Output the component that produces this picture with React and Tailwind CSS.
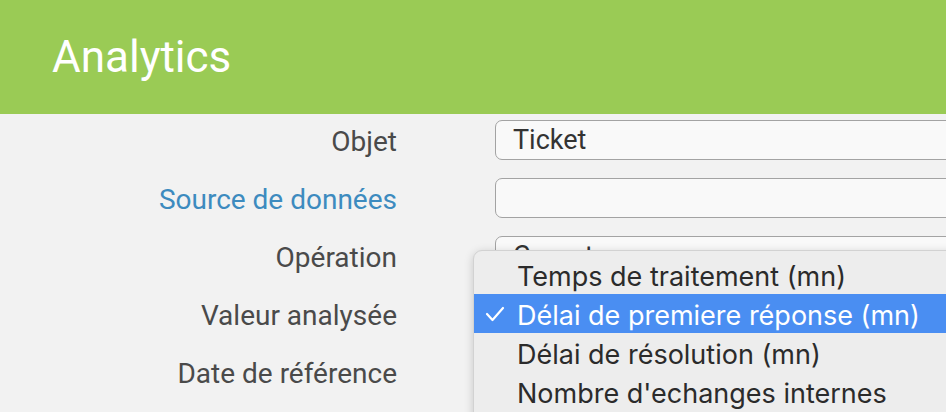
import React from "react";

const labels = [
  { t: "Objet", blue: false },
  { t: "Source de données", blue: true },
  { t: "Opération", blue: false },
  { t: "Valeur analysée", blue: false },
  { t: "Date de référence", blue: false },
];

const inputs = ["Ticket", "", "Compte", "", ""];

const items = [
  "Temps de traitement (mn)",
  "Délai de premiere réponse (mn)",
  "Délai de résolution (mn)",
  "Nombre d'echanges internes",
];

export default function App() {
  return (
    <div className="relative w-[946px] h-[412px] overflow-hidden bg-[#f2f2f2] font-['Roboto',sans-serif]">
      <div className="h-[114px] bg-[#9acb55] pl-[52px] pt-[35px]">
        <h1 className="text-[44px] leading-none text-white font-normal">Analytics</h1>
      </div>
      <div className="flex flex-col gap-[18px] pt-[6px]">
        {labels.map((l, i) => (
          <div key={l.t} className="flex items-center h-[40px]">
            <div
              className={`w-[397px] shrink-0 text-right text-[28px] leading-none pt-[4px] ${
                l.blue ? "text-[#3d8bbf]" : "text-[#4a4a4a]"
              }`}
            >
              {l.t}
            </div>
            <div className="ml-[98px] shrink-0 w-[520px] h-[40px] border-[1.5px] border-[#a3a3a3] rounded-[7px] bg-[#f9f9f9] flex items-center pl-[17px] text-[27px] text-[#333] leading-none">
              {inputs[i]}
            </div>
          </div>
        ))}
      </div>
      <div className="absolute left-[473px] top-[250px] w-[520px] h-[200px] bg-[#ededed] rounded-tl-[9px] border border-[#d2d2d2] shadow-[0_2px_10px_rgba(0,0,0,0.18)] pt-[4px] font-['Inter',sans-serif]">
        {items.map((it, i) => (
          <div
            key={it}
            className={`relative h-[39px] flex items-center pl-[43px] pt-[3px] text-[27px] leading-none ${
              i === 1 ? "bg-[#4a8ef2] text-white" : "text-[#2b2b2b]"
            }`}
          >
            {i === 1 && (
              <svg
                className="absolute left-[11px] top-[12px]"
                width="20"
                height="16"
                viewBox="0 0 20 16"
                fill="none"
              >
                <polyline
                  points="2,8 7.5,14 18,2"
                  stroke="white"
                  strokeWidth="2.2"
                  strokeLinecap="round"
                  strokeLinejoin="round"
                />
              </svg>
            )}
            {it}
          </div>
        ))}
      </div>
    </div>
  );
}
